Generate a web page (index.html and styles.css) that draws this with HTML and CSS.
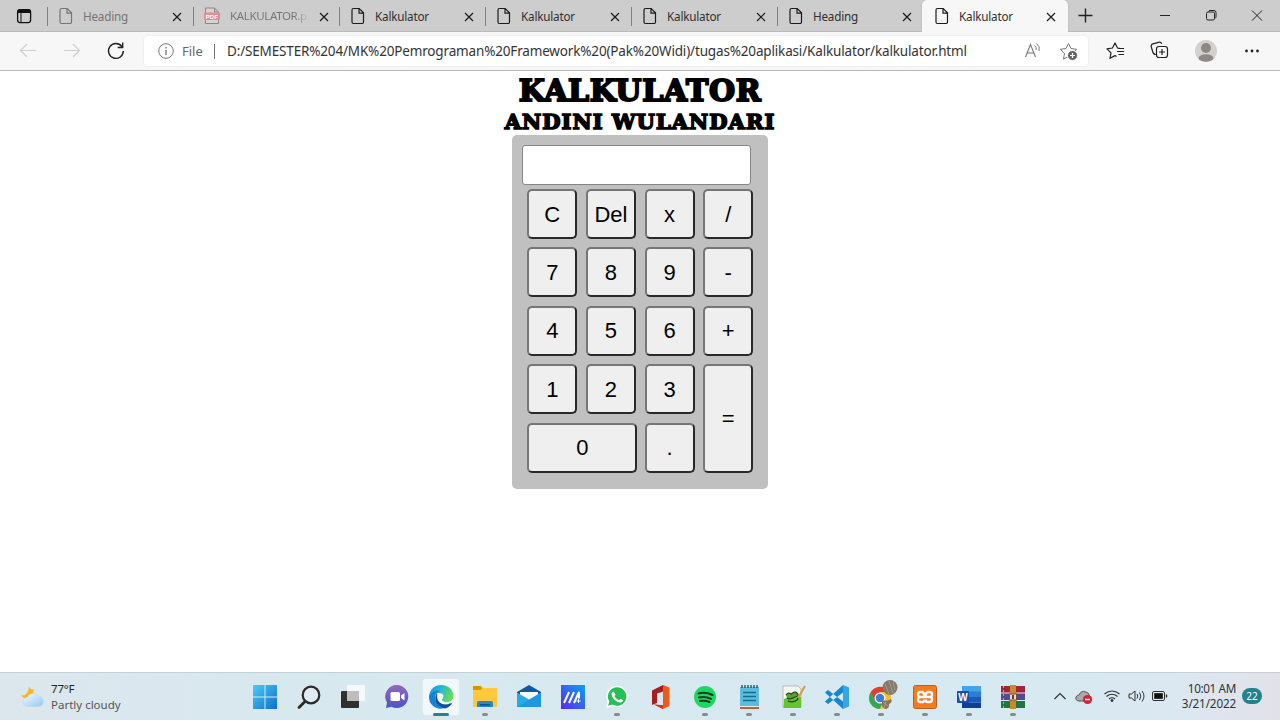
FILE: index.html
```html
<!DOCTYPE html>
<html lang="id">
<head>
<meta charset="utf-8">
<title>Kalkulator</title>
<link rel="stylesheet" href="styles.css">
</head>
<body>
<svg class="defs" width="0" height="0">
  <symbol id="doc" viewBox="0 0 14 18"><path d="M3 1.500h5.200l4.300 4.300v9.200a1.500 1.500 0 0 1-1.500 1.500H2.500A1.500 1.500 0 0 1 1 15V3a1.500 1.500 0 0 1 1.500-1.500zM8 1.800v4.400h4.300" fill="none" stroke="currentColor" stroke-width="1.200"/></symbol>
  <symbol id="x" viewBox="0 0 10 10"><path d="M1 1l8 8M9 1l-8 8" fill="none" stroke="currentColor" stroke-width="1.200"/></symbol>
</svg>
<header class="tabbar">
  <svg class="tab-actions" viewBox="0 0 47 32"><rect x="17.600" y="9.600" width="13" height="13" rx="2.500" fill="none" stroke="#111" stroke-width="1.300"/><path d="M17.500 13v-1.500q0-2.200 2.200-2.200h8.800q2.200 0 2.200 2.200V13z" fill="#111"/><path d="M21 13v9" stroke="#111"/></svg>
  <div class="tab dim"><svg class="doc"><use href="#doc"/></svg><span class="label">Heading</span><svg class="close"><use href="#x"/></svg></div>
  <div class="tab dim"><svg class="doc pdf" viewBox="0 0 16 18"><path d="M1.500 1h9l4 4v11.500h-13zM10.500 1v4h4" fill="#d5d5d5" stroke="#888"/><rect y="5.500" width="16" height="7.500" rx="1" fill="#e18e8e"/><text x="1.800" y="11.500" class="pdf-text">PDF</text></svg><span class="label fade">KALKULATOR.p</span><svg class="close"><use href="#x"/></svg></div>
  <div class="tab"><svg class="doc"><use href="#doc"/></svg><span class="label">Kalkulator</span><svg class="close"><use href="#x"/></svg></div>
  <div class="tab"><svg class="doc"><use href="#doc"/></svg><span class="label">Kalkulator</span><svg class="close"><use href="#x"/></svg></div>
  <div class="tab"><svg class="doc"><use href="#doc"/></svg><span class="label">Kalkulator</span><svg class="close"><use href="#x"/></svg></div>
  <div class="tab"><svg class="doc"><use href="#doc"/></svg><span class="label">Heading</span><svg class="close"><use href="#x"/></svg></div>
  <div class="tab active"><svg class="doc"><use href="#doc"/></svg><span class="label">Kalkulator</span><svg class="close"><use href="#x"/></svg></div>
  <svg class="window-controls" viewBox="0 0 212 32" fill="none" stroke="#222"><path d="M10.500 15.500h14M17.500 8.500v14" stroke-width="1.400"/><path d="M92 15.500h10"/><rect x="138.500" y="12" width="8" height="8" rx="1.500"/><path d="M140.500 11.500q.300-1 1.500-1h4q2 0 2 2v4q0 1.500-1 2"/><path d="M184 10.500l10 10M194 10.500l-10 10"/></svg>
</header>
<nav class="toolbar">
  <svg class="nav-icons" viewBox="0 0 144 38" fill="none"><path d="M36 18.500H20.500M27 12l-6.500 6.500 6.500 6.500M64 18.500h15.500M73 12l6.500 6.500-6.500 6.500" stroke="#cfcfcf" stroke-width="1.200"/><path d="M121.800 14.500A7.400 7.400 0 1 0 123.300 19M122.700 10.500v5h-5" stroke="#222" stroke-width="1.400"/></svg>
  <div class="address">
    <svg class="info" viewBox="0 0 16 16"><circle cx="8" cy="8" r="7.300" fill="none" stroke="#777"/><path d="M8 7v5M8 4v1.500" stroke="#666" stroke-width="1.200"/></svg>
    <span class="scheme">File</span><i class="rule"></i>
    <span class="url">D:/SEMESTER%204/MK%20Pemrograman%20Framework%20(Pak%20Widi)/tugas%20aplikasi/Kalkulator/kalkulator.html</span>
    <svg class="address-icons" viewBox="0 0 66 30" fill="none" stroke="#777"><path d="M3.500 21l5-12.500 5 12.500M5.200 17h6.600" stroke-width="1.100"/><path d="M12.500 9.500q2.200 1.500 1.700 4.500M14.500 7.500q4 3 2.500 7.500"/><path d="M46.500 7.500l2.500 5 5.700.800-4.200 4 1 5.800-5-2.800-5 2.800 1-5.800-4.200-4 5.700-.800z" stroke-linejoin="round"/><circle cx="50.500" cy="19.500" r="5" fill="#666" stroke="#fff"/><path d="M48 19.500h5M50.500 17v5" stroke="#fff" stroke-width="1.200"/></svg>
  </div>
  <svg class="tool-icons" viewBox="0 0 192 38" fill="none" stroke="#222" stroke-width="1.200"><path d="M32.500 16.500l-3-.500-2.500-5-2.500 5-5.500.800 4 4-1 5.500 5-2.700 1.500.900M29 19.500h7M30 16.500h6M30.500 22.500h5.500" stroke-linejoin="round"/><path d="M68 22.500q-2.500 0-3.200-2.500l-1.500-5q-.600-2.500 1.700-3.200l5.500-1.500q2.500-.500 3.200 1.500"/><rect x="68.500" y="14.500" width="11" height="11" rx="2.500"/><path d="M74 17v6M71 20h6"/><circle cx="118" cy="19" r="11" fill="#d3d0ce" stroke="none"/><circle cx="118" cy="16" r="5" fill="#8c8885" stroke="none"/><ellipse cx="118" cy="26" rx="7.500" ry="3.700" fill="#8c8885" stroke="none"/><g fill="#222" stroke="none"><circle cx="158.500" cy="19" r="1.400"/><circle cx="164" cy="19" r="1.400"/><circle cx="169.500" cy="19" r="1.400"/></g></svg>
</nav>
<main class="page">
  <h1 class="title">KALKULATOR</h1>
  <h2 class="subtitle">ANDINI WULANDARI</h2>
  <section class="calculator">
    <input class="display" aria-label="Hasil">
    <div class="keys">
      <button>C</button><button>Del</button><button>x</button><button>/</button>
      <button>7</button><button>8</button><button>9</button><button>-</button>
      <button>4</button><button>5</button><button>6</button><button>+</button>
      <button>1</button><button>2</button><button>3</button><button class="equals">=</button>
      <button class="zero">0</button><button>.</button>
    </div>
  </section>
</main>
<footer class="taskbar">
  <div class="weather">
    <svg class="weather-icon" viewBox="0 0 24 24"><defs><linearGradient id="cl" x2="1" y2="1"><stop stop-color="#f4f9ff"/><stop offset="1" stop-color="#93c8f1"/></linearGradient></defs><path d="M8 .5q1.500 3.500 5 3-.5 6-6 8.500-4 1-7-2.500 4 .5 6-2.500 2-3 2-6.500z" fill="#f6b81e"/><path d="M6.500 20.500a4.600 4.600 0 0 1 0-9.200 6 6 0 0 1 10.800-1 4.900 4.900 0 0 1 0 10.200z" fill="url(#cl)" stroke="#b7d5ec" stroke-width=".5"/></svg>
    <div class="weather-text"><span class="temp">77°F</span><span class="sky">Partly cloudy</span></div>
  </div>
  <div class="apps">
    <svg class="app" viewBox="0 0 44 48"><defs><linearGradient id="win" x2="1" y2="1"><stop stop-color="#4fcbf5"/><stop offset="1" stop-color="#0870cf"/></linearGradient></defs><path d="M10 13h11.500v11.500H10zM22.500 13H34v11.500H22.500zM10 25.500h11.500V37H10zM22.500 25.500H34V37H22.500z" fill="url(#win)"/></svg>
    <svg class="app" viewBox="0 0 44 48"><circle cx="24" cy="23" r="8.300" fill="#dfebf0" stroke="#2b2b2b" stroke-width="2.200"/><path d="M18 29.500l-6 6" stroke="#2b2b2b" stroke-width="2.800" stroke-linecap="round"/></svg>
    <svg class="app" viewBox="0 0 44 48"><rect x="10" y="19" width="18" height="17" rx="1" fill="#303030"/><rect x="16" y="13" width="18" height="16" rx="1" fill="#fff" opacity=".75"/><path d="M16 19h12v10H16z" fill="#bdbdbd"/></svg>
    <svg class="app" viewBox="0 0 44 48"><defs><linearGradient id="chat" x2="0" y2="1"><stop stop-color="#9367b8"/><stop offset="1" stop-color="#4b55ca"/></linearGradient></defs><path d="M22 13a11.500 11.500 0 1 1-5.500 21.700L11 36l1-5.500A11.500 11.500 0 0 1 22 13z" fill="url(#chat)"/><rect x="15.500" y="20" width="9.500" height="9" rx="1.500" fill="#fff"/><path d="M26 23.500l3.500-2.500v7.500L26 26z" fill="#fff"/></svg>
    <svg class="app" viewBox="0 0 44 48"><defs><linearGradient id="edge" x2="1" y2=".4"><stop stop-color="#1690dd"/><stop offset=".5" stop-color="#28b8d5"/><stop offset="1" stop-color="#62dc5a"/></linearGradient></defs><rect x="3.500" y="6.500" width="37" height="37" rx="3" fill="#f1f8fc" stroke="#dfe9ee"/><path d="M10 26C10 17 16 13 22 13c8 0 12.500 5 12.300 11 0 5-4.300 6.700-8 6-3-.5-4-2-2.700-3.500C27 22 20 17 10 26z" fill="url(#edge)"/><path d="M10 26c1-6 6-8 11-7-4 1-6 5-4.500 9 2 5 10 7 15.500 2.500C28 38 18 38.500 13 33q-3-3-3-7z" fill="#1682d4"/><path d="M18 21c-4 5-1 13 8 15.500 3-.5 6-3 7.500-6-5 3.500-12 2.500-14.500-2-1.500-3-.5-6-1-7.500z" fill="#124e9b"/><rect x="14" y="41" width="16" height="3" rx="1.500" fill="#27818e"/></svg>
    <svg class="app" viewBox="0 0 44 48"><path d="M10 15q0-1 1-1h7l2 2h13q1 0 1 1v18H10z" fill="#ffc83d"/><path d="M10 14h7.500l2 2-2 2H10z" fill="#d99500"/><path d="M14 35v-4q0-2 2-2h12q2 0 2 2v4z" fill="#2687c9"/><rect x="17" y="32" width="10" height="1.600" fill="#0d5495"/><rect class="run" x="19" y="41" width="6" height="3" rx="1.500"/></svg>
    <svg class="app" viewBox="0 0 44 48"><path d="M10 20l12-7 12 7v5H10z" fill="#1058a5"/><path d="M13 20h18v8l-9 4-9-4z" fill="#f7f7f7"/><path d="M10 20.500l12 7 12-7V35H10z" fill="#29a9e6"/><path d="M34 21v14H10z" fill="#1d8edb" opacity=".65"/></svg>
    <svg class="app" viewBox="0 0 44 48"><defs><linearGradient id="ma" x1="0" y1="1" x2="1" y2="0"><stop stop-color="#5b28f2"/><stop offset="1" stop-color="#08a2f5"/></linearGradient></defs><path d="M10 13h24v24H10z" fill="url(#ma)"/><path d="M13 31l5-11M18 31l5-11M23 31l5-11v6.500" fill="none" stroke="#fff" stroke-width="2"/><path d="M25.500 29h4M27.500 27v4" stroke="#fff"/></svg>
    <svg class="app" viewBox="0 0 44 48"><path d="M22 14.500a10 10 0 1 1-4.500 18.900L12 35l1.500-5.500A10 10 0 0 1 22 14.500z" fill="#25bf52" stroke="#fff" stroke-width="1.500"/><path d="M18.500 19.500l2 3-1 1.700q2 3 4.300 4l1.700-1.500 2.800 1.600q-.8 2.700-3.800 2.200-7-1.800-8-8.500 0-2 2-2.500z" fill="#fff"/><rect class="run" x="19" y="41" width="6" height="3" rx="1.500"/></svg>
    <svg class="app" viewBox="0 0 44 48"><path d="M13 18.500l11-5.500v6.500l-6 2v9.500l-5 2z" fill="#a91d20"/><path d="M24 13l6.500 2.500v18.500L24 37l-9-4.500 9 .8z" fill="#ed5b16"/><path d="M15 32.500l9 .8V37z" fill="#d23322"/></svg>
    <svg class="app" viewBox="0 0 44 48"><circle cx="22" cy="25" r="11" fill="#1ed760"/><path d="M15.500 21.500q7-2 14 1.500M16 25.500q6-1.500 12 1.300M17 29q5-1 9.500 1" fill="none" stroke="#123c20" stroke-width="2" stroke-linecap="round"/><rect class="run" x="19" y="41" width="6" height="3" rx="1.500"/></svg>
    <svg class="app" viewBox="0 0 44 48"><path d="M13 34h19v3H13z" fill="#b9662c"/><path d="M13 34h19v1H13z" fill="#eee"/><path d="M13 15h19v19H13z" fill="#59bddb"/><path d="M16 20.500h13M16 24.500h13M16 28.500h13" stroke="#146c94" stroke-width="1.500"/><path d="M15 13v3M18 13v3M21 13v3M24 13v3M27 13v3M30 13v3" stroke="#27465a" stroke-width="1.300"/><rect class="run" x="19" y="41" width="6" height="3" rx="1.500"/></svg>
    <svg class="app" viewBox="0 0 44 48"><path d="M12 14h15l3 3v18H12z" fill="#f5f7ef" stroke="#999" stroke-width=".6"/><path d="M13 27q9-5 17-2v11H12.500z" fill="#63c52b"/><path d="M15 23q2-3 5-1 4-3 6-1 3 3-2 4-5 3-8 1M17 29q5 2 9-1" fill="#54a534" stroke="#28471e" stroke-width="1.200"/><path d="M34 14l-7 12" stroke="#d79b3a" stroke-width="2"/><path d="M27 26l-.8 2" stroke="#333" stroke-width="1.500"/><rect class="run" x="19" y="41" width="6" height="3" rx="1.500"/></svg>
    <svg class="app" viewBox="0 0 44 48"><path d="M28 13v7.500L13 32l-3-2.500L28 13zM28 37v-7.500L13 18l-3 2.500L28 37z" fill="#1687ce"/><path d="M28 13l6 2.500v19L28 37z" fill="#35a5e8"/><rect class="run" x="19" y="41" width="6" height="3" rx="1.500"/></svg>
    <svg class="app" viewBox="0 0 44 48"><circle cx="21" cy="26" r="11" fill="#f4c02a"/><path d="M11.500 20.500A11 11 0 0 1 30.500 20H21l-5 9z" fill="#df3c32"/><path d="M11.500 20.500l5 8.500 7 2.500-3 5.500A11 11 0 0 1 11.500 20.500z" fill="#33a852"/><circle cx="21" cy="26" r="5.500" fill="#fff"/><circle cx="21" cy="26" r="4.200" fill="#3b7de0"/><circle cx="31" cy="15.500" r="7.500" fill="#84796b"/><path d="M26 12l4 10M30 9l4 12M34 10l2 8" stroke="#a99d8c" stroke-width="1"/><path d="M23 28q5 2 9-1 2 3-2 5 1 4-3 5-5 0-4-9z" fill="#85745e"/><path d="M24 30l6 5M27 30l-2 6" stroke="#a99a7e"/><rect class="run" x="19" y="41" width="6" height="3" rx="1.500"/></svg>
    <svg class="app" viewBox="0 0 44 48"><rect x="10.500" y="13.500" width="23" height="23" rx="2" fill="#f47b20" stroke="#b96222"/><path d="M20.500 20h-3q-2.500 0-2.500 2.500 0 2.500 2 2.500-2 0-2 2.500 0 2.500 2.500 2.500h2q2 0 2-2.500M23.500 20h3q2.500 0 2.500 2.500 0 2.500-2 2.500 2 0 2 2.500 0 2.500-2.500 2.500h-2q-2 0-2-2.500M20.500 20q0 3 1.500 3t1.500-3M17 25h10" fill="none" stroke="#fff" stroke-width="2.300"/><rect class="run" x="19" y="41" width="6" height="3" rx="1.500"/></svg>
    <svg class="app" viewBox="0 0 44 48"><path d="M15 14h19v6H15z" fill="#41a5ee"/><path d="M15 19.500h19V25H15z" fill="#2b7cd3"/><path d="M15 25h19v5.500H15z" fill="#185abd"/><path d="M15 30.500h19V36H15z" fill="#103f91"/><rect x="10" y="19" width="12" height="12" rx="1" fill="#174fa8"/><text x="11.300" y="28.600" class="word">W</text><rect class="run" x="19" y="41" width="6" height="3" rx="1.500"/></svg>
    <svg class="app" viewBox="0 0 44 48"><path d="M10 14h24v6.500H10z" fill="#a02635"/><path d="M10 21.500h24V28H10z" fill="#594891"/><path d="M10 29h24v7H10z" fill="#257543"/><path d="M12.500 14v22" stroke="#d9a544" stroke-dasharray="2 2"/><path d="M19 13h6v24h-6z" fill="#c78834"/><rect x="18.500" y="22" width="7" height="6" fill="#ddd" stroke="#78502e"/><path d="M22 23v4" stroke="#6b3c1d" stroke-width="2"/><rect class="run" x="19" y="41" width="6" height="3" rx="1.500"/></svg>
  </div>
  <svg class="tray" viewBox="0 0 140 48" fill="none" stroke="#333"><path d="M19.500 27l5.500-5.500 5.500 5.500" stroke-width="1.200"/><path d="M44 29q-4-.500-3-4 1-2 3-2 2-5 7-3 3 .500 3.500 4 2 1 1.500 5z" fill="#aaa" stroke="#555"/><circle cx="52.500" cy="27.500" r="4.500" fill="#d91f32" stroke="none"/><path d="M50 27.500h5" stroke="#fff" stroke-width="1.500"/><path d="M69.500 22q7.500-6 15 0M71.500 24.500q5.500-4.500 11 0M74 27q3-2.500 6 0" stroke-width="1.200"/><circle cx="77" cy="28.500" r="1" fill="#222"/><path d="M94 22h2.500l3.500-3v10l-3.500-3H94zM102 22q1.500 2 0 4.500M104.500 20.500q2.700 3.500 0 7.500M107 19q4 5 0 10.500"/><rect x="117.500" y="19.500" width="12" height="9" rx="1.500"/><path d="M119.500 21.500h8v5h-8z" fill="#111"/><path d="M131.500 22.500v3" stroke-width="1.500"/></svg>
  <div class="clock"><span class="time">10:01 AM</span><span class="date">3/21/2022</span></div>
  <span class="badge">22</span>
</footer>
</body>
</html>
```
FILE: styles.css
```css
* { box-sizing: border-box; }
body { margin: 0; width: 1280px; height: 720px; overflow: hidden; background: #fff; display: flex; flex-direction: column; font-family: "Noto Sans", "Open Sans", sans-serif; }
.defs { display: none; }
svg { display: block; flex: none; }
.tabbar { height: 32px; flex: none; display: flex; background: #cdcdcd; border-bottom: 1px solid #bababa; }
.tab-actions { width: 47px; height: 32px; }
.tab { width: 146px; height: 32px; flex: none; display: flex; align-items: center; padding-left: 12px; position: relative; color: #1b1b1b; background: linear-gradient(#808080, #808080) 0 7px / 1px 19px no-repeat; }
.doc { width: 14px; height: 18px; margin-right: 11px; }
.doc.pdf { width: 16px; margin: 0 11px 0 -1px; }
.pdf-text { font: bold 6px "Liberation Sans", sans-serif; fill: #fff; }
.label { width: 82px; margin-left: -1px; font-size: 11.7px; line-height: 18px; letter-spacing: -.2px; white-space: nowrap; margin-right: 7px; color: #303030; }
.dim .doc, .dim .label { color: #757575; }
.dim .fade { font-size: 11.500px; letter-spacing: -.35px; color: transparent; background: linear-gradient(90deg, #757575 64px, #c2c2c2 78px); background-clip: text; }
.close { width: 10px; height: 10px; margin-top: 1px; }
.active { width: 146px; margin-left: -1px; padding-left: 13px; background: #f7f7f7; border-radius: 5px 5px 0 0; box-shadow: 0 0 2px #8886; }
.active .label { width: 81px; }
.active .close { margin-left: -1px; }
.window-controls { width: 212px; height: 32px; }
.toolbar { height: 39px; flex: none; display: flex; background: #f7f7f7; border-bottom: 1px solid #b9b9b9; position: relative; }
.nav-icons { width: 144px; height: 38px; }
.address { width: 944px; height: 30px; margin-top: 4px; padding-left: 14px; background: #fff; border-radius: 4px; box-shadow: 0 0 3px #0001; display: flex; align-items: center; white-space: nowrap; }
.info { width: 16px; height: 16px; margin-right: 8px; }
.scheme { font-size: 13px; color: #666; width: 32px; }
.rule { width: 1px; height: 15px; background: #777; margin-right: 12px; }
.url { width: 795px; font-size: 13.5px; color: #333; letter-spacing: -.16px; }
.address-icons { width: 66px; height: 30px; }
.tool-icons { width: 192px; height: 38px; }
.page { flex: 1; min-height: 0; display: flex; flex-direction: column; align-items: center; }
.title, .subtitle { margin: 0; font-family: "DejaVu Serif", serif; font-weight: bold; color: #000; white-space: nowrap; }
.title { font-size: 30px; line-height: 36px; height: 36px; margin-top: 2px; letter-spacing: .6px; -webkit-text-stroke: 2px #000; }
.subtitle { font-size: 21px; line-height: 28px; height: 28px; margin-top: -1px; letter-spacing: 1.050px; -webkit-text-stroke: 1.600px #000; }
.calculator { width: 256px; height: 354px; flex: none; background: #c0c0c0; border-radius: 5px; padding: 10px 10px 0; margin-top: -1px; }
.display { display: block; width: 229px; height: 40px; border: 1px solid #858585; border-radius: 3px; background: #fff; }
.keys { display: grid; grid-template-columns: repeat(4, 50px); grid-template-rows: repeat(5, 50px); gap: 8.4px 8.670px; margin: 4px 0 0 5.300px; }
.keys button { margin: 0; padding: 1px 0 0; border: 2px solid; border-color: #767676 #292929 #292929 #767676; border-radius: 5px; background: #efefef; font: 22px "Liberation Sans", sans-serif; color: #000; }
.keys .equals { grid-column: 4; grid-row: 4 / 6; }
.keys .zero { grid-column: 1 / 3; grid-row: 5; width: 110px; }
.taskbar { height: 48px; flex: none; display: flex; background: linear-gradient(90deg, #dce7ed, #d8e8ef 22%, #d7e9f1 80%, #dbe8f1 92%, #e2e1e9); border-top: 1px solid #c6d1d6; }
.weather { width: 243px; display: flex; padding-left: 21px; }
.weather-icon { width: 24px; height: 24px; margin-top: 13px; }
.weather-text { display: flex; flex-direction: column; margin: 8px 0 0 6px; font-size: 11.5px; line-height: 16px; color: #555; white-space: nowrap; }
.temp { color: #222; letter-spacing: -.2px; }
.apps { display: flex; margin-top: -1px; }
.app { width: 44px; height: 48px; }
.run { fill: #868c90; }
.word { font: bold 10px "Liberation Sans", sans-serif; fill: #fff; }
.tray { width: 140px; height: 48px; margin-top: -1px; }
.clock { width: 61px; display: flex; flex-direction: column; text-align: right; margin: 8px 1px 0 0; font-size: 11.7px; line-height: 15px; color: #333; white-space: nowrap; letter-spacing: -.35px; }
.date { letter-spacing: -.15px; }
.badge { width: 20px; height: 16px; margin: 15px 0 0 5px; border-radius: 8px; background: #23808d; color: #fff; font-size: 10px; line-height: 16px; text-align: center; }
```
